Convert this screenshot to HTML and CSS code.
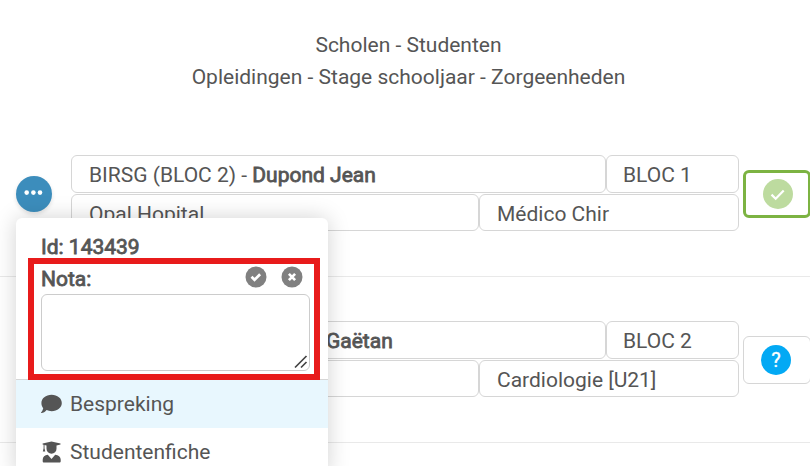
FILE: index.html
```
<!DOCTYPE html>
<html lang="nl">
<head>
  <meta charset="UTF-8">
  <meta name="viewport" content="width=device-width, initial-scale=1.0">
  <title>Scholen - Studenten</title>
  <link rel="stylesheet" href="styles.css">
</head>
<body>

  <header>
    <div>Scholen - Studenten</div>
    <div>Opleidingen - Stage schooljaar - Zorgeenheden</div>
  </header>

  <div class="record">
    <div class="actions">
      <button class="menu-btn">
        <svg width="36" height="36" viewBox="0 0 36 36"><circle cx="10.7" cy="16.6" r="2.3"/><circle cx="17.4" cy="16.6" r="2.3"/><circle cx="24" cy="16.6" r="2.3"/></svg>
      </button>

      <!-- Dropdown menu of the first student -->
      <div class="menu">
        <div class="menu-id">Id: 143439</div>
        <div class="note">
          <div class="note-head">
            <span class="note-label">Nota:</span>
            <svg class="note-icon" width="22" height="22" viewBox="0 0 22 22"><circle cx="11" cy="11" r="10.5"/><path d="M6.500 10.800l3 3 5.600-5.600"/></svg>
            <svg class="note-icon" width="22" height="22" viewBox="0 0 22 22"><circle cx="11" cy="11" r="10.5"/><path d="M7.900 7.900l6.200 6.200M14.100 7.900l-6.200 6.200"/></svg>
          </div>
          <div class="note-box">
            <svg class="grip" width="14" height="14" viewBox="0 0 14 14"><path d="M1 12.500L12.500 1M7 12.500L12.500 7"/></svg>
          </div>
        </div>
        <div class="menu-item active">
          <svg width="21" height="20" viewBox="0 0 21 20"><path d="M10.6.8c5.8 0 10.2 3.6 10.2 8.2s-4.4 8.2-10.2 8.2c-1.900 0-3.600-.4-5-1.100C4.200 18 2.200 19.100.5 19.100c-.5 0-.6-.5-.3-.8 1-1 1.700-2.500 2-4C1 12.800.4 11 .4 9 .4 4.400 4.800.8 10.600.8z"/></svg>
          <span>Bespreking</span>
        </div>
        <div class="menu-item">
          <svg width="21" height="22" viewBox="0 0 21 22"><path d="M1.600 2.400L10.500.4l9 2v1.100l-4 1v3.200a4.900 4.900 0 0 1-10 0V4.500l-2-.5v3.200l.8 3.300H1.800l.8-3.300V3.800l-1-.3zM6.800 13.800l3.700 4.200 3.700-4.200c3.200.2 5.500 2.100 5.500 5v1.400c0 .8-.5 1.300-1.300 1.300H3c-.8 0-1.300-.5-1.300-1.300v-1.400c0-2.900 2.100-4.800 5.100-5z"/></svg>
          <span>Studentenfiche</span>
        </div>
      </div>
    </div>
    <div class="fields">
      <div class="line line-top">
        <div class="field"><span>BIRSG (BLOC 2) - </span><span class="name">Dupond Jean</span></div>
        <div class="field bloc"><span>BLOC 1</span></div>
      </div>
      <div class="line line-bottom">
        <div class="field"><span>Opal Hopital</span></div>
        <div class="field"><span>Médico Chir</span></div>
      </div>
    </div>
    <div class="status approved">
      <svg width="30" height="30" viewBox="0 0 30 30"><circle cx="15" cy="15" r="15"/><path d="M8.500 15.600l4.200 4.200 8-8.300"/></svg>
    </div>
  </div>

  <div class="record">
    <div class="actions"></div>
    <div class="fields">
      <div class="line line-top">
        <div class="field"><span class="name last-name">Gaëtan</span></div>
        <div class="field bloc"><span>BLOC 2</span></div>
      </div>
      <div class="line line-bottom">
        <div class="field"></div>
        <div class="field"><span>Cardiologie [U21]</span></div>
      </div>
    </div>
    <div class="status">
      <span class="question">?</span>
    </div>
  </div>

</body>
</html>
```
FILE: styles.css
```
* {
  box-sizing: border-box;
}
body {
  font-family: Roboto, sans-serif;
  font-size: 21px;
  line-height: 32px;
  color: #555;
  background-color: #fff;
  margin: 0;
  height: 466px;
  overflow: hidden;
}
svg {
  display: block;
  flex: none;
}
header {
  height: 111px;
  padding: 29px 0 0;
  width: 817px;
  text-align: center;
}

/* Student rows */
.record {
  display: flex;
  align-items: flex-start;
  height: 166px;
  width: 820px;
  padding: 44px 0 0 16px;
  border-bottom: 1px solid #e9e9e9;
}
.actions {
  position: relative;
  width: 55px;
  padding-top: 21px;
}
.menu-btn {
  display: block;
  width: 36px;
  height: 36px;
  padding: 0;
  border: none;
  border-radius: 50%;
  background-color: #3c8dbc;
  box-shadow: 0 2px 4px rgba(0, 0, 0, 0.12);
  cursor: pointer;
}
.menu-btn svg {
  fill: #fff;
}
.fields {
  width: 668px;
}
.line {
  display: grid;
}
.line-top {
  grid-template-columns: 535px 133px;
  height: 38px;
  margin-bottom: 1px;
}
.line-bottom {
  grid-template-columns: 408px 260px;
  height: 37px;
}
.field {
  display: flex;
  align-items: center;
  padding: 2px 0 0 17px;
  border: 1px solid #d6d6d6;
  border-radius: 6px;
  white-space: pre;
}
.bloc {
  padding-left: 16px;
}
.name {
  -webkit-text-stroke: 0.8px #555;
}
.last-name {
  margin-left: 237px;
}

/* Status boxes */
.status {
  display: flex;
  align-items: center;
  width: 68px;
  height: 48px;
  margin: 15px 0 0 4px;
  padding-left: 17px;
  border: 1px solid #d6d6d6;
  border-radius: 6px;
}
.status.approved {
  border: 3px solid #7cb342;
}
.approved circle {
  fill: #bddb9f;
}
.approved path {
  fill: none;
  stroke: #fff;
  stroke-width: 2.2;
}
.question {
  width: 30px;
  height: 30px;
  line-height: 31px;
  border-radius: 50%;
  background-color: #03a9f4;
  color: #fff;
  font-size: 20px;
  -webkit-text-stroke: 0.3px #fff;
  text-align: center;
}

/* Dropdown */
.menu {
  position: absolute;
  top: 63px;
  left: 0;
  z-index: 10;
  width: 312px;
  padding-top: 12px;
  border-radius: 6px;
  background-color: #fff;
  box-shadow: 0 0 22px rgba(0, 0, 0, 0.18);
}
.menu-id {
  height: 28px;
  padding: 1px 0 0 25px;
  -webkit-text-stroke: 0.8px #555;
}
.note {
  position: relative;
  z-index: 1; /* red frame stays above the border of the first item */
  width: 292px;
  height: 122px;
  margin-left: 12px;
  padding: 0 4px 0 7px;
  border: 6px solid #e81b1b;
}
.note-head {
  display: flex;
  align-items: center;
  gap: 14px;
  height: 30px;
  padding: 0 7px 4px 0;
}
.note-label {
  margin-right: auto;
  padding-top: 3px;
  line-height: 28px;
  -webkit-text-stroke: 0.8px #555;
}
.note-icon {
  fill: #808080;
}
.note-icon path {
  fill: none;
  stroke: #fff;
  stroke-width: 2.7;
}
.note-box {
  display: flex;
  align-items: flex-end;
  justify-content: flex-end;
  width: 269px;
  height: 77px;
  padding: 1px;
  border: 1px solid #ccc;
  border-radius: 6px;
}
.grip {
  fill: none;
  stroke: #444;
  stroke-width: 1.7;
}
.menu-item {
  display: flex;
  align-items: center;
  gap: 8px;
  height: 48px;
  padding-left: 25px;
}
.menu-item svg {
  fill: #555;
}
.menu-item.active {
  height: 49px;
  margin-top: -1px;
  border-top: 1px solid #d6d6d6;
  background-color: #e8f7fe;
}
```
